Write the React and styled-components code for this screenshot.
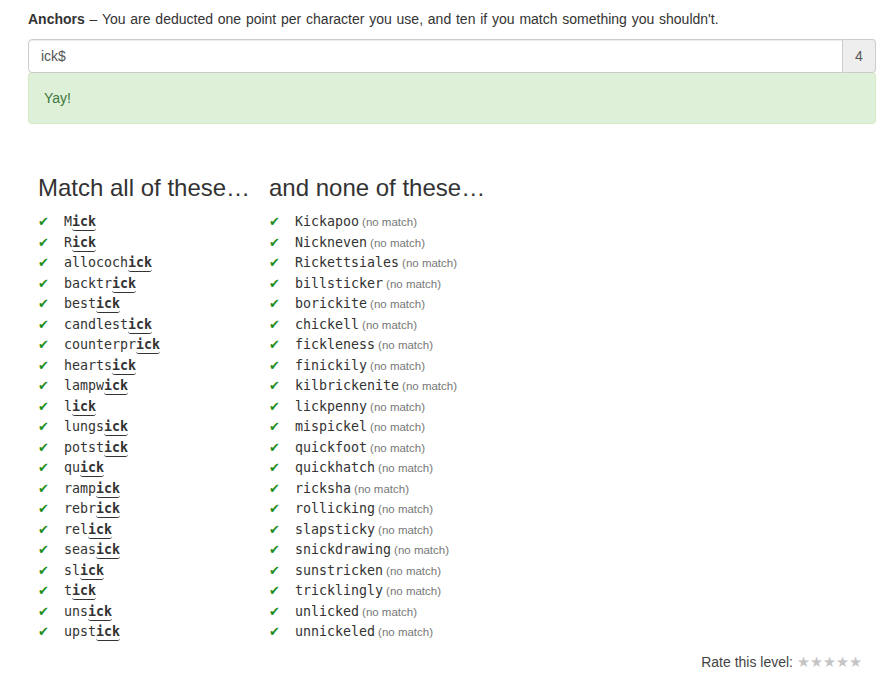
import React from "react";
import styled, { createGlobalStyle } from "styled-components";

const matches = [
  ["M", "ick"],
  ["R", "ick"],
  ["allococh", "ick"],
  ["backtr", "ick"],
  ["best", "ick"],
  ["candlest", "ick"],
  ["counterpr", "ick"],
  ["hearts", "ick"],
  ["lampw", "ick"],
  ["l", "ick"],
  ["lungs", "ick"],
  ["potst", "ick"],
  ["qu", "ick"],
  ["ramp", "ick"],
  ["rebr", "ick"],
  ["rel", "ick"],
  ["seas", "ick"],
  ["sl", "ick"],
  ["t", "ick"],
  ["uns", "ick"],
  ["upst", "ick"],
];

const nonMatches = [
  "Kickapoo",
  "Nickneven",
  "Rickettsiales",
  "billsticker",
  "borickite",
  "chickell",
  "fickleness",
  "finickily",
  "kilbrickenite",
  "lickpenny",
  "mispickel",
  "quickfoot",
  "quickhatch",
  "ricksha",
  "rollicking",
  "slapsticky",
  "snickdrawing",
  "sunstricken",
  "tricklingly",
  "unlicked",
  "unnickeled",
];

const Global = createGlobalStyle`
  body {
    margin: 0;
    background: #fff;
    font-family: "Liberation Sans", Arial, sans-serif;
    font-size: 14px;
    color: #333;
  }
`;

const Page = styled.div`
  width: 848px;
  padding: 9px 0 0 28px;
`;

const Intro = styled.p`
  margin: 0 0 10px;
  line-height: 20px;
  word-spacing: 0.9px;
`;

const InputGroup = styled.div`
  display: flex;
  height: 34px;
`;

const Field = styled.div`
  flex: 1;
  border: 1px solid #ccc;
  border-radius: 4px 0 0 4px;
  padding: 6px 12px;
  color: #555;
  line-height: 20px;
  box-shadow: inset 0 1px 1px rgba(0, 0, 0, 0.075);
`;

const Addon = styled.div`
  width: 32px;
  border: 1px solid #ccc;
  border-left: none;
  border-radius: 0 4px 4px 0;
  background: #eee;
  color: #555;
  text-align: center;
  line-height: 32px;
`;

const Alert = styled.div`
  background: #dff0d8;
  border: 1px solid #d6e9c6;
  border-radius: 4px;
  color: #3c763d;
  padding: 15px;
  line-height: 20px;
  margin-top: -1px;
`;

const Columns = styled.div`
  display: grid;
  grid-template-columns: 231px 1fr;
  padding: 50px 0 0 10px;
`;

const Heading = styled.h3`
  margin: 0 0 10px;
  font-size: 24px;
  font-weight: 500;
  line-height: 28px;
`;

const List = styled.ul`
  list-style: none;
  margin: 0;
  padding: 0;
`;

const Item = styled.li`
  display: flex;
  align-items: baseline;
  height: 20.5px;
  line-height: 20.5px;
`;

const Check = styled.span`
  width: 26px;
  flex: none;
  color: #1f8f1f;
  font-size: 13px;
  font-family: "DejaVu Sans", sans-serif;
`;

const Word = styled.code`
  font-family: "DejaVu Sans Mono", monospace;
  font-size: 13.3px;
  color: #333;
`;

const Hit = styled.span`
  font-weight: bold;
  border-bottom: 1px solid #333;
  border-radius: 0 0 3px 3px;
  padding-bottom: 1px;
`;

const NoMatch = styled.small`
  margin-left: 3px;
  font-size: 11.5px;
  color: #777;
`;

const Footer = styled.div`
  display: flex;
  justify-content: flex-end;
  align-items: center;
  gap: 4px;
  padding: 11px 14px 0 0;
  color: #444;
`;

const Stars = styled.span`
  color: #c4c4c4;
  font-family: "DejaVu Sans", sans-serif;
  font-size: 14.5px;
`;

export default function App() {
  return (
    <>
      <Global />
      <Page>
        <Intro>
          <b>Anchors</b> – You are deducted one point per character you use,
          and ten if you match something you shouldn't.
        </Intro>
        <InputGroup>
          <Field>ick$</Field>
          <Addon>4</Addon>
        </InputGroup>
        <Alert>Yay!</Alert>
        <Columns>
          <div>
            <Heading>Match all of these…</Heading>
            <List>
              {matches.map(([pre, hit]) => (
                <Item key={pre + hit}>
                  <Check>✔</Check>
                  <Word>
                    {pre}
                    <Hit>{hit}</Hit>
                  </Word>
                </Item>
              ))}
            </List>
          </div>
          <div>
            <Heading>and none of these…</Heading>
            <List>
              {nonMatches.map((w) => (
                <Item key={w}>
                  <Check>✔</Check>
                  <Word>{w}</Word>
                  <NoMatch>(no match)</NoMatch>
                </Item>
              ))}
            </List>
          </div>
        </Columns>
        <Footer>
          Rate this level:
          <Stars>★★★★★</Stars>
        </Footer>
      </Page>
    </>
  );
}
